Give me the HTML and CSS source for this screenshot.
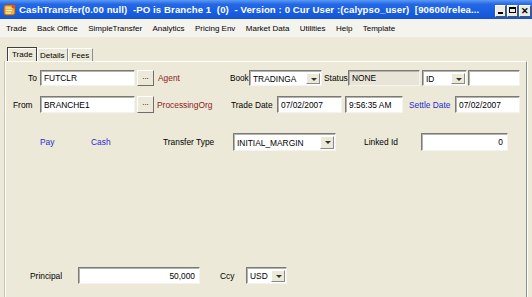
FILE: index.html
```html
<html>
<head>
	<title>CashTransfer</title>
	<link rel="stylesheet" href="styles.css">
</head>
<body>
	<div class="window">
		<!-- title bar -->
		<div class="title-bar">
			<svg class="app-icon" width="14" height="14" viewBox="0 0 14 14">
				<rect x="1" y="2" width="11" height="10" rx="2" fill="#f0b040" stroke="#a05a10" stroke-width="1"></rect>
				<path d="M3 5 L10 5 M3 7.5 L9 7.5 M3 10 L8 10" stroke="#fff6d0" stroke-width="1.2"></path>
				<circle cx="10.5" cy="3.5" r="2" fill="#e05020"></circle>
			</svg>
			<div class="title-text">CashTransfer(0.00 null)&nbsp; -PO is Branche 1&nbsp; (0)&nbsp; - Version : 0 Cur User :(calypso_user)&nbsp; [90600/relea...</div>
			<div class="title-buttons">
				<div class="tb-btn"><span class="tb-min"></span></div>
				<div class="tb-btn"><span class="tb-max"></span></div>
				<div class="tb-btn tb-close">&#x2715;</div>
			</div>
		</div>

		<!-- menu -->
		<div class="menu-bar">
			<span class="menu-item">Trade</span>
			<span class="menu-item">Back Office</span>
			<span class="menu-item">SimpleTransfer</span>
			<span class="menu-item">Analytics</span>
			<span class="menu-item">Pricing Env</span>
			<span class="menu-item">Market Data</span>
			<span class="menu-item">Utilities</span>
			<span class="menu-item">Help</span>
			<span class="menu-item">Template</span>
		</div>

		<!-- tabs -->
		<div class="tab-strip">
			<div class="tab tab-active">Trade</div>
			<div class="tab">Details</div>
			<div class="tab">Fees</div>
		</div>

		<div class="tab-panel">
			<div class="form-row row-to">
				<span class="lbl lbl-to">To</span>
				<div class="field w-party">FUTCLR</div>
				<div class="dots-btn">...</div>
				<span class="lbl red lbl-agent">Agent</span>
				<span class="lbl lbl-book">Book</span>
				<div class="combo w-book"><span class="combo-text">TRADINGA</span><span class="combo-arrow"></span></div>
				<span class="lbl lbl-status">Status</span>
				<div class="field field-grey w-status">NONE</div>
				<div class="combo w-id"><span class="combo-text">ID</span><span class="combo-arrow"></span></div>
				<div class="field w-idval"></div>
			</div>

			<div class="form-row row-from">
				<span class="lbl lbl-from">From</span>
				<div class="field w-party">BRANCHE1</div>
				<div class="dots-btn">...</div>
				<span class="lbl red lbl-po">ProcessingOrg</span>
				<span class="lbl lbl-tdate">Trade Date</span>
				<div class="field w-date">07/02/2007</div>
				<div class="field w-time">9:56:35 AM</div>
				<span class="lbl blue lbl-sdate">Settle Date</span>
				<div class="field w-date">07/02/2007</div>
			</div>

			<div class="form-row row-type">
				<span class="lbl blue lbl-pay">Pay</span>
				<span class="lbl blue lbl-cash">Cash</span>
				<span class="lbl lbl-ttype">Transfer Type</span>
				<div class="combo w-ttype"><span class="combo-text">INITIAL_MARGIN</span><span class="combo-arrow"></span></div>
				<span class="lbl lbl-linked">Linked Id</span>
				<div class="field num w-linked">0</div>
			</div>

			<div class="form-row row-principal">
				<span class="lbl lbl-principal">Principal</span>
				<div class="field num w-principal">50,000</div>
				<span class="lbl lbl-ccy">Ccy</span>
				<div class="combo w-ccy"><span class="combo-text">USD</span><span class="combo-arrow"></span></div>
			</div>
		</div>
	</div>
</body>
</html>
```

FILE: styles.css
```css
html, body {
	margin: 0;
	padding: 0;
	width: 100%;
	height: 100%;
	overflow: hidden;
}

body {
	background-color: #ece9d8;
	font-family: "Liberation Sans", Arial, sans-serif;
	font-size: 8px;
	color: #000;
}

.window {
	width: 532px;
	height: 297px;
	display: flex;
	flex-direction: column;
}

/* title bar */
.title-bar {
	height: 19px;
	display: flex;
	align-items: center;
	background: linear-gradient(#5b9af4 0%, #2468e6 22%, #1a5fe0 60%, #1455d4 100%);
	color: #fff;
	padding-left: 3px;
}

.app-icon {
	flex: none;
}

.title-text {
	font-weight: bold;
	font-size: 9.6px;
	margin-left: 2px;
	white-space: nowrap;
	flex: 1;
	letter-spacing: 0.1px;
}

.title-buttons {
	display: flex;
	gap: 1px;
	margin-right: 1px;
	align-self: flex-start;
	margin-top: 5px;
}

.tb-btn {
	width: 11px;
	height: 12px;
	background-color: #ecebe4;
	border: 1px solid #ffffff;
	border-right-color: #555;
	border-bottom-color: #555;
	box-sizing: border-box;
	position: relative;
	color: #000;
	font-size: 9px;
	font-weight: bold;
	line-height: 10px;
	text-align: center;
}

.tb-min {
	position: absolute;
	left: 2px;
	bottom: 2px;
	width: 5px;
	height: 2px;
	background: #000;
}

.tb-max {
	position: absolute;
	left: 1px;
	top: 1px;
	width: 7px;
	height: 6px;
	border: 1px solid #000;
	border-top-width: 2px;
	box-sizing: border-box;
}

.tb-close {
	width: 12px;
}

/* menu */
.menu-bar {
	height: 18px;
	display: flex;
	align-items: center;
	background-color: #f4f3ee;
	padding-left: 6px;
	font-size: 8px;
}

.menu-item {
	margin-right: 10.4px;
}

/* tabs */
.tab-strip {
	display: flex;
	margin-top: 10px;
	margin-left: 7px;
	height: 14px;
}

.tab {
	height: 13px;
	padding: 0 3px 0 2px;
	font-size: 8px;
	line-height: 13px;
	border-left: 1px solid #fff;
	border-right: 1px solid #8d8d8d;
	border-top: 1px solid #fff;
	box-sizing: border-box;
	margin-top: 1px;
}

.tab-active {
	border: 1px solid #404040;
	border-bottom: none;
	box-shadow: inset 1px 1px 0 #fff;
	margin-top: 0;
	height: 14px;
	width: 30px;
	padding: 0 4px;
}

.tab-panel {
	flex: 1;
	margin-left: 5px;
	margin-right: 5px;
	border-left: 1px solid #fff;
	border-top: 1px solid #fff;
	border-right: 1px solid #8d8d8d;
	box-shadow: -1px 0 0 #c8c4b0, 1px 0 0 #fff;
	padding-top: 8px;
}

/* rows */
.form-row {
	display: flex;
	align-items: center;
	white-space: nowrap;
}

.row-to {
	height: 16px;
}

.row-from {
	height: 17px;
	margin-top: 10px;
}

.row-type {
	height: 18px;
	margin-top: 20px;
}

.row-principal {
	height: 17px;
	margin-top: 116px;
}

.lbl {
	flex: none;
	font-size: 8.4px;
}

.red {
	color: #8e1b1b;
}

.blue {
	color: #2a2ad0;
}

.field {
	height: 100%;
	box-sizing: border-box;
	background-color: #fff;
	border: 1px solid;
	border-color: #7a7a7a #f4f3ee #f4f3ee #7a7a7a;
	box-shadow: inset 1px 1px 0 #b5b2a6;
	padding-left: 3px;
	padding-right: 4px;
	font-size: 8.4px;
	display: flex;
	align-items: center;
	flex: none;
}

.field-grey {
	background-color: #e8e5d8;
}

.num {
	justify-content: flex-end;
}

.dots-btn {
	width: 17px;
	height: 100%;
	box-sizing: border-box;
	border: 1px solid;
	border-color: #fff #6e6e6e #6e6e6e #fff;
	margin-left: 2px;
	text-align: center;
	font-size: 8px;
	line-height: 11px;
	flex: none;
}

.combo {
	height: 100%;
	box-sizing: border-box;
	background-color: #fff;
	border: 1px solid;
	border-color: #7a7a7a #f4f3ee #f4f3ee #7a7a7a;
	box-shadow: inset 1px 1px 0 #b5b2a6;
	display: flex;
	align-items: center;
	flex: none;
	padding: 2px 1px 1px 2px;
}

.combo-text {
	flex: 1;
	font-size: 8.4px;
	padding-left: 1px;
}

.combo-arrow {
	width: 14px;
	height: 100%;
	box-sizing: border-box;
	background-color: #ece9d8;
	border: 1px solid;
	border-color: #fff #8a8a8a #8a8a8a #fff;
	position: relative;
	flex: none;
}

.combo-arrow::after {
	content: "";
	position: absolute;
	left: 4px;
	top: 4px;
	border-left: 3px solid transparent;
	border-right: 3px solid transparent;
	border-top: 3px solid #333;
}

/* row 1 positions */
.lbl-to { margin-left: 22px; width: 12px; }
.w-party { width: 95px; }
.lbl-agent { margin-left: 4px; width: 72px; }
.lbl-book { width: 19px; font-size: 8.2px; }
.w-book { width: 73px; }
.lbl-status { margin-left: 2px; width: 24px; }
.w-status { width: 72px; }
.w-id { width: 45px; margin-left: 2px; }
.w-idval { width: 52px; margin-left: 1px; }

/* row 2 positions */
.lbl-from { margin-left: 7px; width: 27px; }
.lbl-po { margin-left: 3px; width: 74px; }
.lbl-tdate { width: 46px; }
.w-date { width: 65px; }
.w-time { width: 58px; margin-left: 3px; }
.lbl-sdate { margin-left: 6px; width: 46px; }

/* row 3 positions */
.lbl-pay { margin-left: 34px; width: 51px; }
.lbl-cash { width: 72px; }
.lbl-ttype { width: 70px; }
.w-ttype { width: 103px; }
.lbl-linked { margin-left: 28px; width: 57px; }
.w-linked { width: 87px; }

/* row 4 positions */
.lbl-principal { margin-left: 24px; width: 48px; }
.w-principal { width: 122px; }
.lbl-ccy { margin-left: 20px; width: 26px; }
.w-ccy { width: 41px; }
```
